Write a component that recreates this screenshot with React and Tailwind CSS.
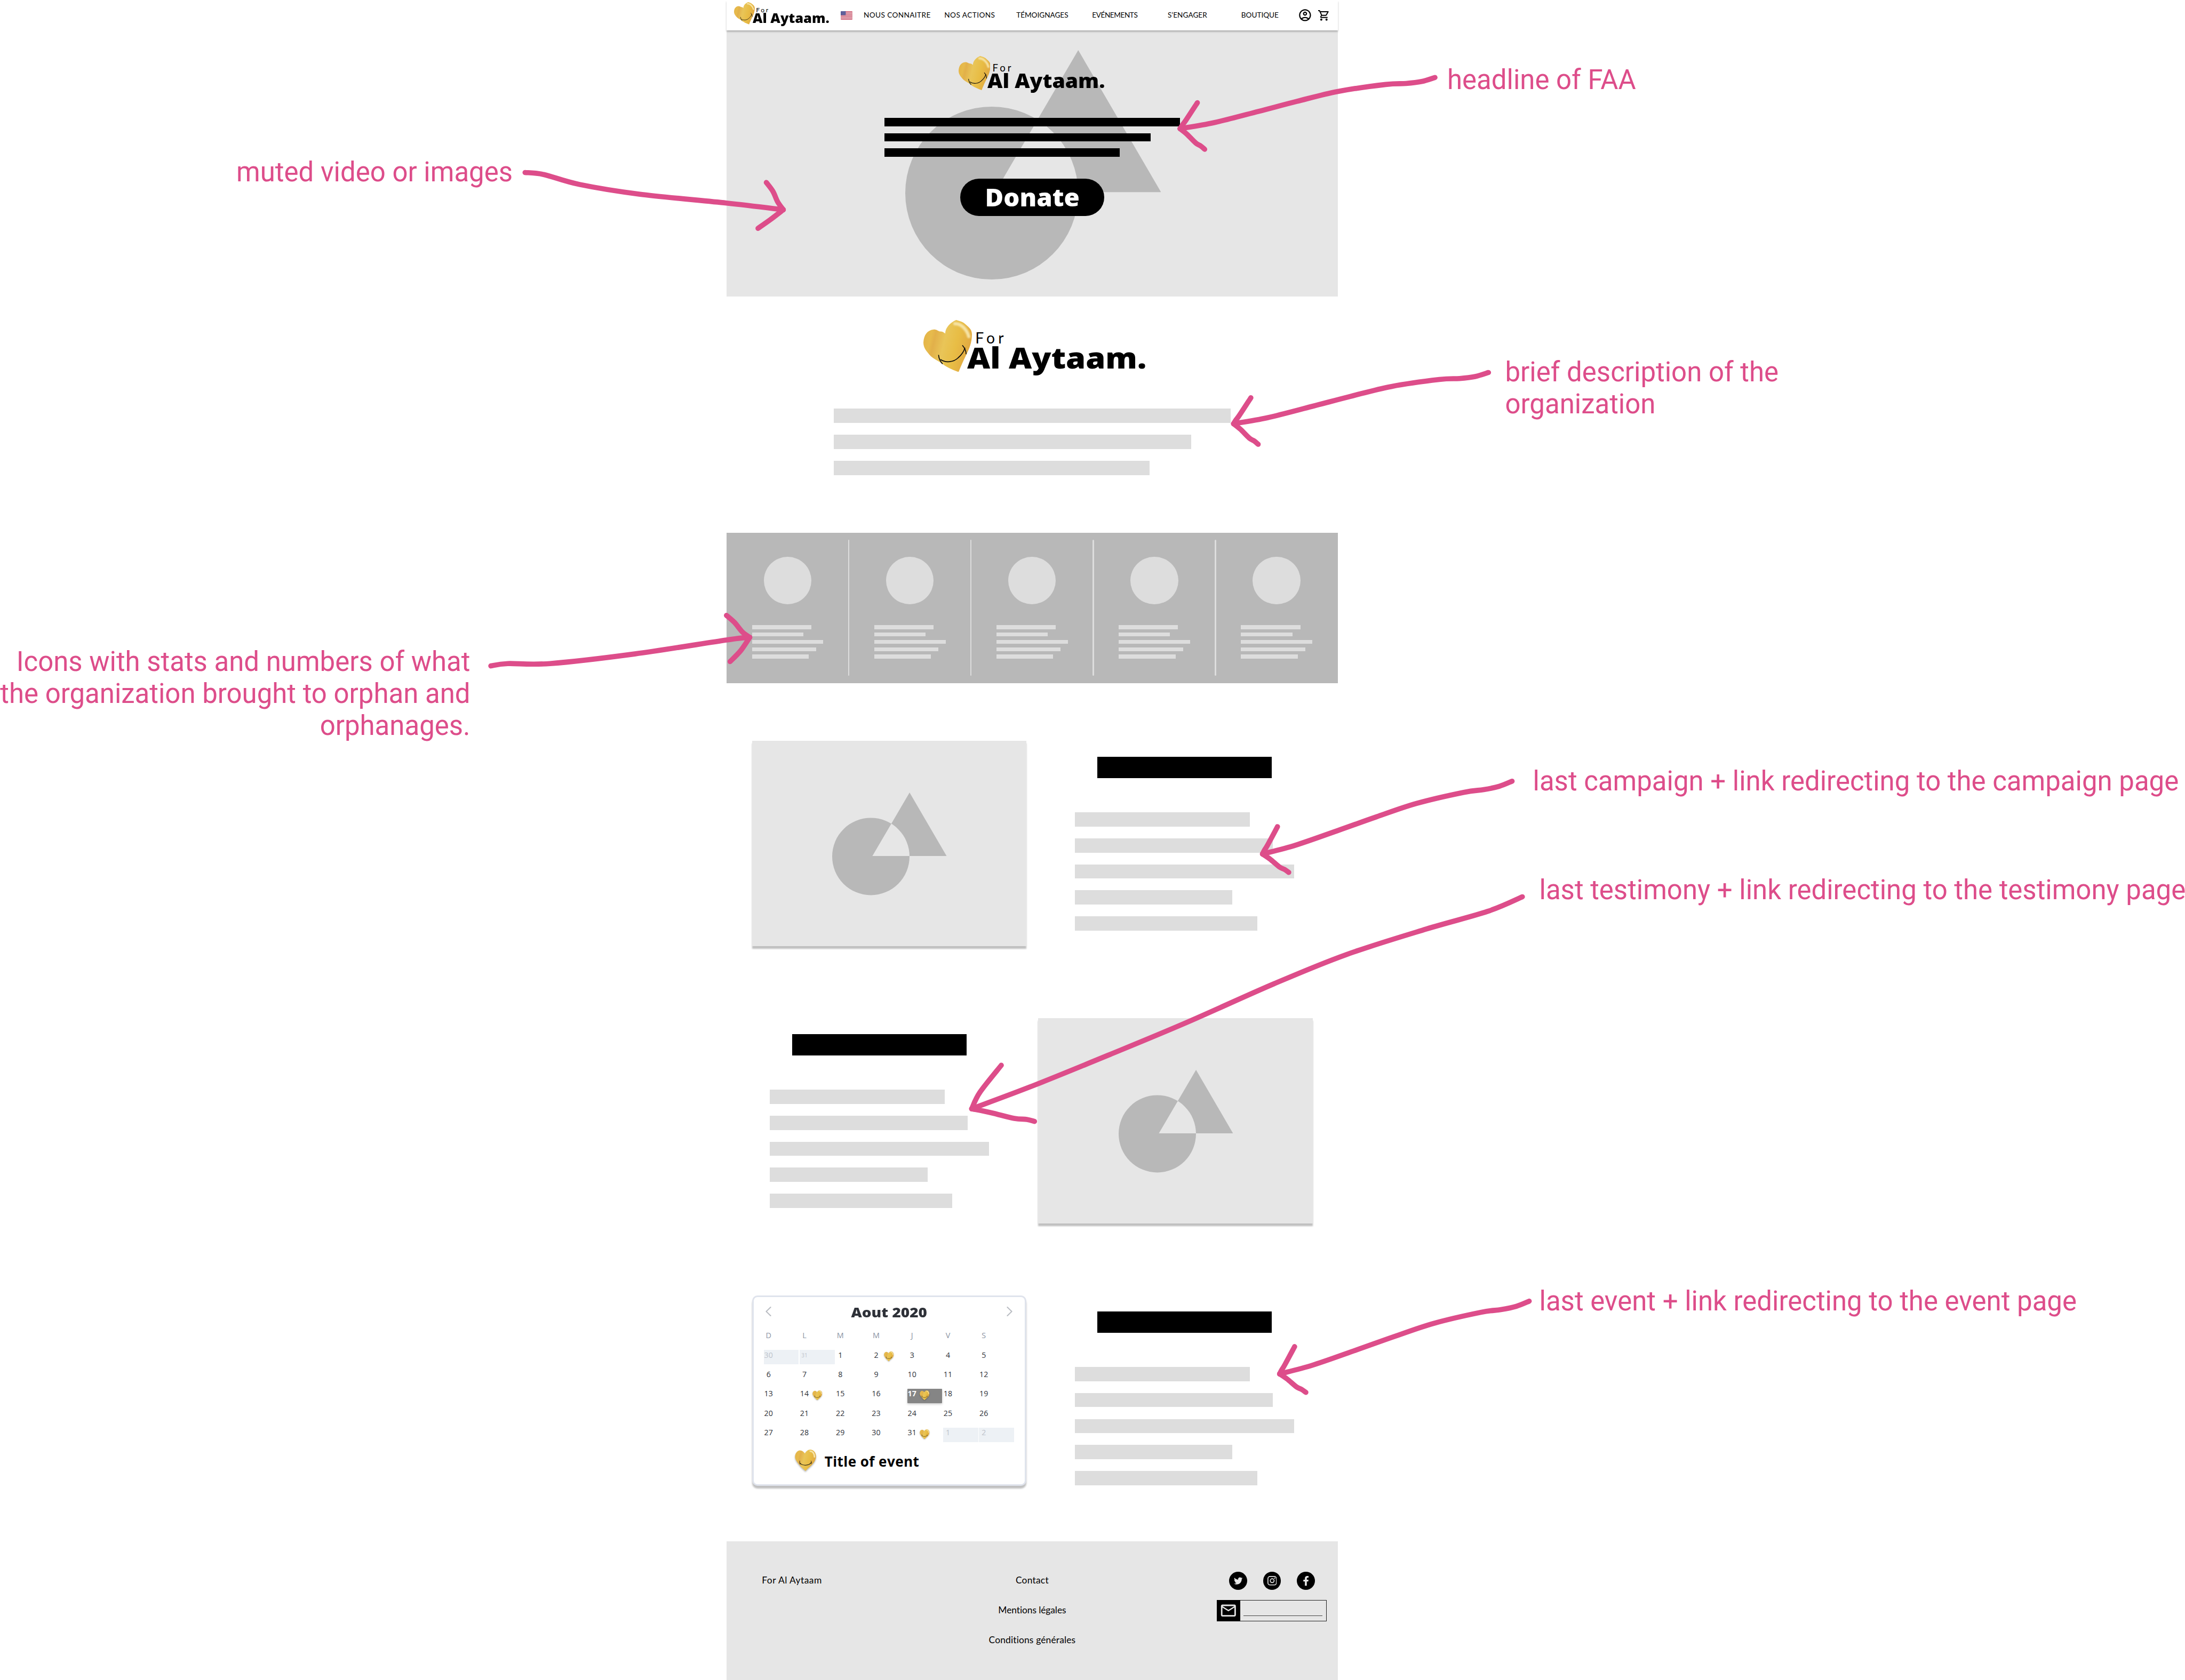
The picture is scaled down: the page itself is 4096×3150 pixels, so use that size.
import React from 'react';
import { MdOutlineAccountCircle, MdOutlineShoppingCart, MdMailOutline } from 'react-icons/md';
import { FaTwitter, FaFacebookF } from 'react-icons/fa';

/* ---------- brand ---------- */

function TiltedHeart() {
  return (
    <svg viewBox="0 0 91 97.6" className="h-[0.976em] w-[0.91em] shrink-0">
      <defs>
        <linearGradient id="gold" x1="0" x2="1" y1="0" y2="0.25">
          <stop offset="0" stopColor="#e3b145" />
          <stop offset="0.22" stopColor="#e7bb4c" />
          <stop offset="0.3" stopColor="#e2b04a" />
          <stop offset="0.5" stopColor="#e9c558" />
          <stop offset="0.75" stopColor="#e8bd45" />
          <stop offset="1" stopColor="#e2ab42" />
        </linearGradient>
        <filter id="soft" x="-30%" y="-30%" width="160%" height="160%">
          <feGaussianBlur stdDeviation="1.6" />
        </filter>
      </defs>
      <path
        d="M66 97.6 C54 93 42 88 34 81 C26 76 20 73 14 68 C5 58 0 52 0 42 C1 28 7 19 19.5 17.7 C25 17.6 26 20 31 21.5 C36 21.5 38 23 41 25.5 C41 13 52 4 61.5 0 C68 2 74 3 80 9 C87 15 91 19 91 27 C91 42 86 54 81.5 62.7 C77 72 70 87 66 97.6Z"
        fill="url(#gold)"
      />
      <path d="M59 7 C68 6 81 15 85 31" fill="none" stroke="#f6e4a6" strokeWidth="6" strokeLinecap="round" filter="url(#soft)" />
      <path d="M32 74 C42 81 57 79 65 71 C72 65 76 59 78 52" fill="none" stroke="#0b0b0b" strokeWidth="1.7" />
      <path d="M28.5 66 C29 72 31 77 35.5 81.8 M73.5 48 C77 52 80 57 80 63.5" fill="none" stroke="#0b0b0b" strokeWidth="1.7" strokeLinecap="round" />
    </svg>
  );
}

function Heart({ className }) {
  return (
    <svg viewBox="0 0 100 100" className={className}>
      <path
        d="M50 100 C41 91 28 82 17 66 C8 54 1 45 1 33 C2 16 12 5 24 4 C33 4 41 10 47 18 C53 7 63 0 73 0 C89 1 100 16 99 34 C98 51 89 61 80 71 C69 82 56 92 50 100Z"
        fill="url(#gold)"
      />
      <path d="M72 7 C84 8 91 18 92 34" fill="none" stroke="#f6e4a6" strokeWidth="7" strokeLinecap="round" filter="url(#soft)" />
      <path d="M23 62 C34 77 66 77 77 60" fill="none" stroke="#0b0b0b" strokeWidth="2.6" />
      <path d="M23 53 C22 59 22 64 25 69 M76 53 C79 58 79 63 77 67" fill="none" stroke="#0b0b0b" strokeWidth="2" strokeLinecap="round" />
    </svg>
  );
}

function Logo({ className }) {
  return (
    <div className={`flex h-[1.05em] w-[4.16em] shrink-0 items-start leading-none text-black ${className}`}>
      <TiltedHeart />
      <div className="-ml-[0.09em] pt-[0.195em] whitespace-nowrap">
        <div className="pl-[0.53em] font-['Lato',sans-serif] text-[0.283em] leading-none tracking-[0.218em]">For</div>
        <div className="mt-[0.003em] origin-left scale-x-[1.072] font-['Open_Sans',sans-serif] text-[0.556em] leading-[0.8] font-extrabold">
          Al Aytaam.
        </div>
      </div>
    </div>
  );
}

/* ---------- placeholders ---------- */

function Shapes({ className }) {
  return (
    <svg viewBox="0 0 214.6 192.4" className={className}>
      <path
        fillRule="evenodd"
        fill="#b8b8b8"
        d="M0 119.9 A72.5 72.5 0 1 1 145 119.9 A72.5 72.5 0 1 1 0 119.9Z M145.1 0 L214.5 119.1 L75.4 119.1Z"
      />
    </svg>
  );
}

function ImageCard() {
  return (
    <div className="h-[385.2px] w-[514.2px] shrink-0 bg-[#e6e6e6] pt-[97px] pl-[150.4px] shadow-[0_5px_2.5px_rgba(0,0,0,0.25)]">
      <Shapes className="h-[192.4px] w-[214.6px]" />
    </div>
  );
}

function TextBlock() {
  return (
    <div className="w-[503px] shrink-0 pt-[30.2px]">
      <div className="ml-[42px] h-[39.7px] w-[327px] bg-black" />
      <div className="mt-[64px] flex flex-col gap-[22.1px]">
        <div className="h-[26.7px] w-[327.6px] bg-[#dddddd]" />
        <div className="h-[26.7px] w-[370.5px] bg-[#dddddd]" />
        <div className="h-[26.7px] w-[410.6px] bg-[#dddddd]" />
        <div className="h-[26.7px] w-[295.4px] bg-[#dddddd]" />
        <div className="h-[26.7px] w-[341.9px] bg-[#dddddd]" />
      </div>
    </div>
  );
}

/* ---------- header ---------- */

const NAV = [
  ['NOUS CONNAITRE', 'tracking-[0.4px]'],
  ['NOS ACTIONS', 'tracking-[0.45px]'],
  ['TÉMOIGNAGES', 'tracking-[-0.03px]'],
  ['EVÉNEMENTS', 'tracking-[-0.43px]'],
  ['S’ENGAGER', 'tracking-[0.03px]'],
  ['BOUTIQUE', 'tracking-[0px]'],
];

function Flag() {
  return (
    <svg viewBox="0 0 22 16" className="h-[16px] w-[22px]">
      <clipPath id="flagClip">
        <rect width="22" height="16" rx="1.3" />
      </clipPath>
      <g clipPath="url(#flagClip)">
        <rect width="22" height="16" fill="#f3e6ea" />
        {[0, 1, 2, 3, 4, 5, 6].map((i) => (
          <rect key={i} y={i * 2.46} width="22" height="1.23" fill="#c5415a" />
        ))}
        <rect width="9.4" height="7.4" fill="#4b4d8f" />
        {[0, 1, 2, 3].map((r) =>
          [0, 1, 2, 3].map((c) => (
            <circle key={`${r}-${c}`} cx={1.2 + c * 2.2 + (r % 2) * 0.8} cy={1.2 + r * 1.7} r="0.42" fill="#fff" />
          )),
        )}
      </g>
    </svg>
  );
}

function Header() {
  return (
    <header className="relative z-10 flex h-[57.3px] items-center bg-white shadow-[0_2.5px_3px_rgba(0,0,0,0.25)]">
      <Logo className="mt-[-3.5px] ml-[14px] text-[42.8px]" />
      <div className="ml-[22px] w-[22px]">
        <Flag />
      </div>
      <nav className="ml-[16px] flex font-['Lato',sans-serif] text-[13.6px] text-black">
        {NAV.map(([label, tracking]) => (
          <a key={label} className={`w-[136px] text-center whitespace-nowrap ${tracking}`}>
            {label}
          </a>
        ))}
      </nav>
      <MdOutlineAccountCircle className="ml-[3.4px] size-[26.8px] text-black" />
      <MdOutlineShoppingCart className="ml-[9.6px] size-[23.6px] text-black" />
    </header>
  );
}

/* ---------- sections ---------- */

function Hero() {
  return (
    <section className="relative h-[499.2px] bg-[#e6e6e6]">
      <Shapes className="absolute top-[37.2px] left-[334.9px] h-[430px] w-[479.6px]" />
      <div className="relative flex h-full flex-col pt-[47.8px]">
        <Logo className="ml-[435px] text-[65.6px]" />
        <div className="mt-[47.2px] ml-[296px] flex flex-col gap-[12.95px]">
          <div className="h-[15.7px] w-[554px] bg-black" />
          <div className="h-[15.7px] w-[499.4px] bg-black" />
          <div className="h-[15.7px] w-[440.9px] bg-black" />
        </div>
        <button className="mt-[41px] ml-[438px] flex h-[69.7px] w-[270px] items-center justify-center rounded-full bg-black text-white">
          <span className="scale-x-[1.042] font-['Open_Sans',sans-serif] text-[45.5px] leading-none font-extrabold">
            Donate
          </span>
        </button>
      </div>
    </section>
  );
}

function Description() {
  return (
    <section className="h-[442.1px] pt-[43.2px]">
      <Logo className="ml-[369.4px] text-[100px]" />
      <div className="mt-[61.2px] ml-[201.2px] flex flex-col gap-[22.4px]">
        <div className="h-[26.7px] w-[743.9px] bg-[#dddddd]" />
        <div className="h-[26.7px] w-[669.8px] bg-[#dddddd]" />
        <div className="h-[26.7px] w-[591.7px] bg-[#dddddd]" />
      </div>
    </section>
  );
}

function Stat() {
  return (
    <div className="w-[229.2px] pt-[45.3px]">
      <div className="mx-auto size-[89.4px] rounded-full bg-[#dddddd]" />
      <div className="mt-[38.7px] ml-[47.8px] flex flex-col gap-[6.27px]">
        <div className="h-[7.6px] w-[111.2px] bg-[#dddddd]" />
        <div className="h-[7.6px] w-[96.3px] bg-[#dddddd]" />
        <div className="h-[7.6px] w-[133.8px] bg-[#dddddd]" />
        <div className="h-[7.6px] w-[120.5px] bg-[#dddddd]" />
        <div className="h-[7.6px] w-[106.5px] bg-[#dddddd]" />
      </div>
    </div>
  );
}

function Stats() {
  return (
    <section className="flex h-[282px] bg-[#b8b8b8]">
      {[0, 1, 2, 3, 4].map((i) => (
        <React.Fragment key={i}>
          {i > 0 && <div className="-mx-[1.25px] mt-[13.3px] h-[255.4px] w-[2.5px] rounded-full bg-[#dddddd]" />}
          <Stat />
        </React.Fragment>
      ))}
    </section>
  );
}

/* ---------- calendar ---------- */

const WEEKDAYS = ['D', 'L', 'M', 'M', 'J', 'V', 'S'];
const DAYS = [
  { n: 30, out: true },
  { n: 31, out: true, small: true },
  ...Array.from({ length: 31 }, (_, i) => ({ n: i + 1 })),
  { n: 1, out: true },
  { n: 2, out: true },
];
const EVENTS = [2, 14, 17, 31];

function dayTone({ n, out, small }) {
  if (small) return 'text-[10px] text-[#bdc3cb]';
  if (out) return 'text-[14.2px] text-[#bdc3cb]';
  if (n === 17) return 'text-[14.2px] font-bold text-white';
  return 'text-[14.2px] text-[#2e3138]';
}

function cellTone({ n, out }) {
  if (out) return 'bg-[#edf1f5]';
  if (n === 17) return 'rounded-[1px] bg-[#858585] shadow-[0_2px_4px_rgba(0,0,0,0.2)]';
  return '';
}

function Day({ day }) {
  return (
    <div className={`flex h-[27.1px] w-[65.7px] ${cellTone(day)}`}>
      <span className={`flex h-[19.6px] w-[18px] items-center justify-center leading-none ${dayTone(day)}`}>{day.n}</span>
      {!day.out && EVENTS.includes(day.n) && (
        <Heart className="mt-[3.4px] ml-[5.8px] size-[18.4px] drop-shadow-[0_1.5px_1px_rgba(0,0,0,0.3)]" />
      )}
    </div>
  );
}

function Chevron({ d }) {
  return (
    <svg viewBox="0 0 11 18" className="-mt-[3px] h-[18px] w-[11px]">
      <path d={d} fill="none" stroke="#b9bcc2" strokeWidth="2" strokeLinecap="round" strokeLinejoin="round" />
    </svg>
  );
}

function Calendar() {
  return (
    <div className="h-[357px] w-[514.2px] shrink-0 rounded-[10px] border-[3px] border-[#dfe3ec] bg-white font-['Open_Sans',sans-serif] shadow-[0_5px_3px_rgba(0,0,0,0.25)]">
      <div className="flex h-[57.2px] items-center justify-between pr-[23px] pl-[22px]">
        <Chevron d="M9.6 1 L1.4 9 L9.6 17" />
        <div className="scale-x-[1.1] text-[25.4px] leading-none font-extrabold text-[#2e3138]">Aout 2020</div>
        <Chevron d="M1.4 1 L9.6 9 L1.4 17" />
      </div>
      <div className="grid h-[30px] grid-cols-[repeat(7,67.26px)] items-center pl-[19px] text-[14.4px] leading-none text-[#8c94a3]">
        {WEEKDAYS.map((d, i) => (
          <span key={i} className="w-[18px] text-center">
            {d}
          </span>
        ))}
      </div>
      <div className="mt-[11.5px] grid grid-cols-[repeat(7,67.26px)] gap-y-[9.35px] pl-[19px]">
        {DAYS.map((day, i) => (
          <Day key={i} day={day} />
        ))}
      </div>
      <div className="mt-[14.6px] flex items-center pl-[77px]">
        <Heart className="size-[40px] drop-shadow-[0_2px_1.5px_rgba(0,0,0,0.3)]" />
        <span className="mt-[3px] ml-[16px] text-[26.1px] leading-none font-bold tracking-[0.42px] text-black">
          Title of event
        </span>
      </div>
    </div>
  );
}

/* ---------- footer ---------- */

function Instagram() {
  return (
    <svg viewBox="0 0 85 85" className="size-[17.6px]" fill="none" stroke="currentColor" strokeWidth="8">
      <rect x="4" y="4" width="77" height="77" rx="20" />
      <circle cx="42.5" cy="42.5" r="17.5" />
      <circle cx="65.5" cy="20" r="5.5" fill="currentColor" stroke="none" />
    </svg>
  );
}

function Social({ children }) {
  return (
    <span className="flex size-[33.5px] items-center justify-center rounded-full bg-black text-[#e6e6e6]">{children}</span>
  );
}

function Footer() {
  return (
    <footer className="mt-[75.4px] grid h-[261px] grid-cols-3 bg-[#e6e6e6] font-['Lato',sans-serif] text-[17.4px] leading-[24px] text-black">
      <div className="pt-[61.5px] pl-[66.5px] tracking-[0.47px]">For Al Aytaam</div>
      <div className="flex flex-col gap-[31.8px] pt-[61.5px] text-center">
        <span className="tracking-[0.24px]">Contact</span>
        <span className="tracking-[-0.08px]">Mentions légales</span>
        <span className="tracking-[0.16px]">Conditions générales</span>
      </div>
      <div className="flex flex-col items-end pt-[57.4px] pr-[20.6px]">
        <div className="flex gap-[30.1px] pr-[22.5px]">
          <Social>
            <FaTwitter className="size-[16.4px]" />
          </Social>
          <Social>
            <Instagram />
          </Social>
          <Social>
            <FaFacebookF className="mt-[1px] h-[18.3px] w-[18.3px]" />
          </Social>
        </div>
        <div className="mt-[19.6px] flex h-[39.4px] w-[205.6px] border-[1.5px] border-[#222222]">
          <div className="-m-[1.5px] flex w-[43.5px] items-center justify-center bg-black">
            <MdMailOutline className="size-[33.6px] text-[#e6e6e6]" />
          </div>
          <div className="mt-[27.6px] ml-[8px] h-[1.4px] w-[147.8px] bg-[#444444]" />
        </div>
      </div>
    </footer>
  );
}

/* ---------- annotations ---------- */

// Smooth curve through a list of points (Catmull-Rom to Bezier).
function curve(pts) {
  let d = `M${pts[0][0]} ${pts[0][1]}`;
  for (let i = 0; i < pts.length - 1; i++) {
    const p0 = pts[i - 1] || pts[i];
    const p1 = pts[i];
    const p2 = pts[i + 1];
    const p3 = pts[i + 2] || p2;
    d += ` C${p1[0] + (p2[0] - p0[0]) / 6} ${p1[1] + (p2[1] - p0[1]) / 6} ${p2[0] - (p3[0] - p1[0]) / 6} ${p2[1] - (p3[1] - p1[1]) / 6} ${p2[0]} ${p2[1]}`;
  }
  return d;
}

function Arrow({ shaft, upper, lower, transform }) {
  return (
    <g transform={transform}>
      <path d={curve(shaft)} />
      <path d={curve(upper)} />
      <path d={curve(lower)} />
    </g>
  );
}

// Coordinates relative to the arrow's tip.
const SHORT = {
  shaft: [[767, -154], [727, -142], [680, -136], [619, -133], [475, -112], [351, -82], [236, -52], [102, -18], [0, 0]],
  upper: [[52, -78], [18, -26], [7, -11], [0, 0]],
  lower: [[0, 0], [21, 17], [47, 43], [62, 52], [74, 62]],
};

function Arrows() {
  return (
    <svg
      viewBox="0 0 6575 5056"
      className="absolute top-0 left-0 h-[3150px] w-[4096px]"
      fill="none"
      stroke="#dd4d8a"
      strokeWidth="15.5"
      strokeLinecap="round"
      strokeLinejoin="round"
    >
      <Arrow {...SHORT} transform="translate(3551 387)" />
      <Arrow {...SHORT} transform="translate(3712 1275)" />
      <Arrow {...SHORT} transform="translate(3799 2570) rotate(-4.9)" />
      <Arrow {...SHORT} transform="translate(3850.5 4135) rotate(-4.9)" />
      <Arrow
        shaft={[[4581, 2699], [4476, 2743], [4292, 2796], [4051, 2873], [3833, 2961], [3569, 3078], [3339, 3174], [3110, 3267], [2924, 3337]]}
        upper={[[3013, 3206], [2949, 3287], [2924, 3337]]}
        lower={[[2924, 3337], [2983, 3349], [3052, 3366], [3090, 3369], [3113, 3375]]}
      />
      <Arrow
        shaft={[[1580, 519], [1636, 525], [1744, 555], [1923, 584], [2186, 611], [2357, 631]]}
        upper={[[2306, 549], [2326, 576], [2340, 607], [2357, 631]]}
        lower={[[2357, 631], [2318, 661], [2281, 687]]}
      />
      <Arrow
        shaft={[[1477, 2004], [1528, 1997], [1655, 1997], [1910, 1968], [2186, 1926], [2256, 1918]]}
        upper={[[2186, 1852], [2210, 1873], [2234, 1902], [2256, 1918]]}
        lower={[[2256, 1918], [2229, 1958], [2197, 1991]]}
      />
    </svg>
  );
}

function Notes() {
  return (
    <div className="font-['Roboto',sans-serif] text-[50.95px] leading-[60px] whitespace-nowrap text-[#dd4d8a]">
      <p className="absolute top-[119.6px] left-[2713px]">headline of FAA</p>
      <p className="absolute top-[667.8px] left-[2821.5px]">
        brief description of the
        <br />
        organization
      </p>
      <p className="absolute top-[292.8px] right-[3135px] text-right">muted video or images</p>
      <p className="absolute top-[1210.8px] right-[3214.5px] text-right">
        Icons with stats and numbers of what
        <br />
        the organization brought to orphan and
        <br />
        orphanages.
      </p>
      <p className="absolute top-[1435.4px] left-[2873.5px]">last campaign + link redirecting to the campaign page</p>
      <p className="absolute top-[1639px] left-[2885.5px]">last testimony + link redirecting to the testimony page</p>
      <p className="absolute top-[2410px] left-[2885.5px]">last event + link redirecting to the event page</p>
    </div>
  );
}

export default function App() {
  return (
    <div className="relative h-[3150px] w-[4096px] overflow-hidden bg-white">
      <main className="ml-[1361.8px] w-[1146.2px]">
        <Header />
        <Hero />
        <Description />
        <Stats />
        <div className="mt-[108.6px] flex flex-col gap-[134.8px]">
          <section className="flex h-[385.2px] gap-[91.2px] pl-[47.9px]">
            <ImageCard />
            <TextBlock />
          </section>
          <section className="flex h-[385.2px] pl-[81.7px]">
            <TextBlock />
            <ImageCard />
          </section>
          <section className="flex h-[385.2px] items-start gap-[91.2px] pl-[47.9px]">
            <Calendar />
            <TextBlock />
          </section>
        </div>
        <Footer />
      </main>
      <Arrows />
      <Notes />
    </div>
  );
}
